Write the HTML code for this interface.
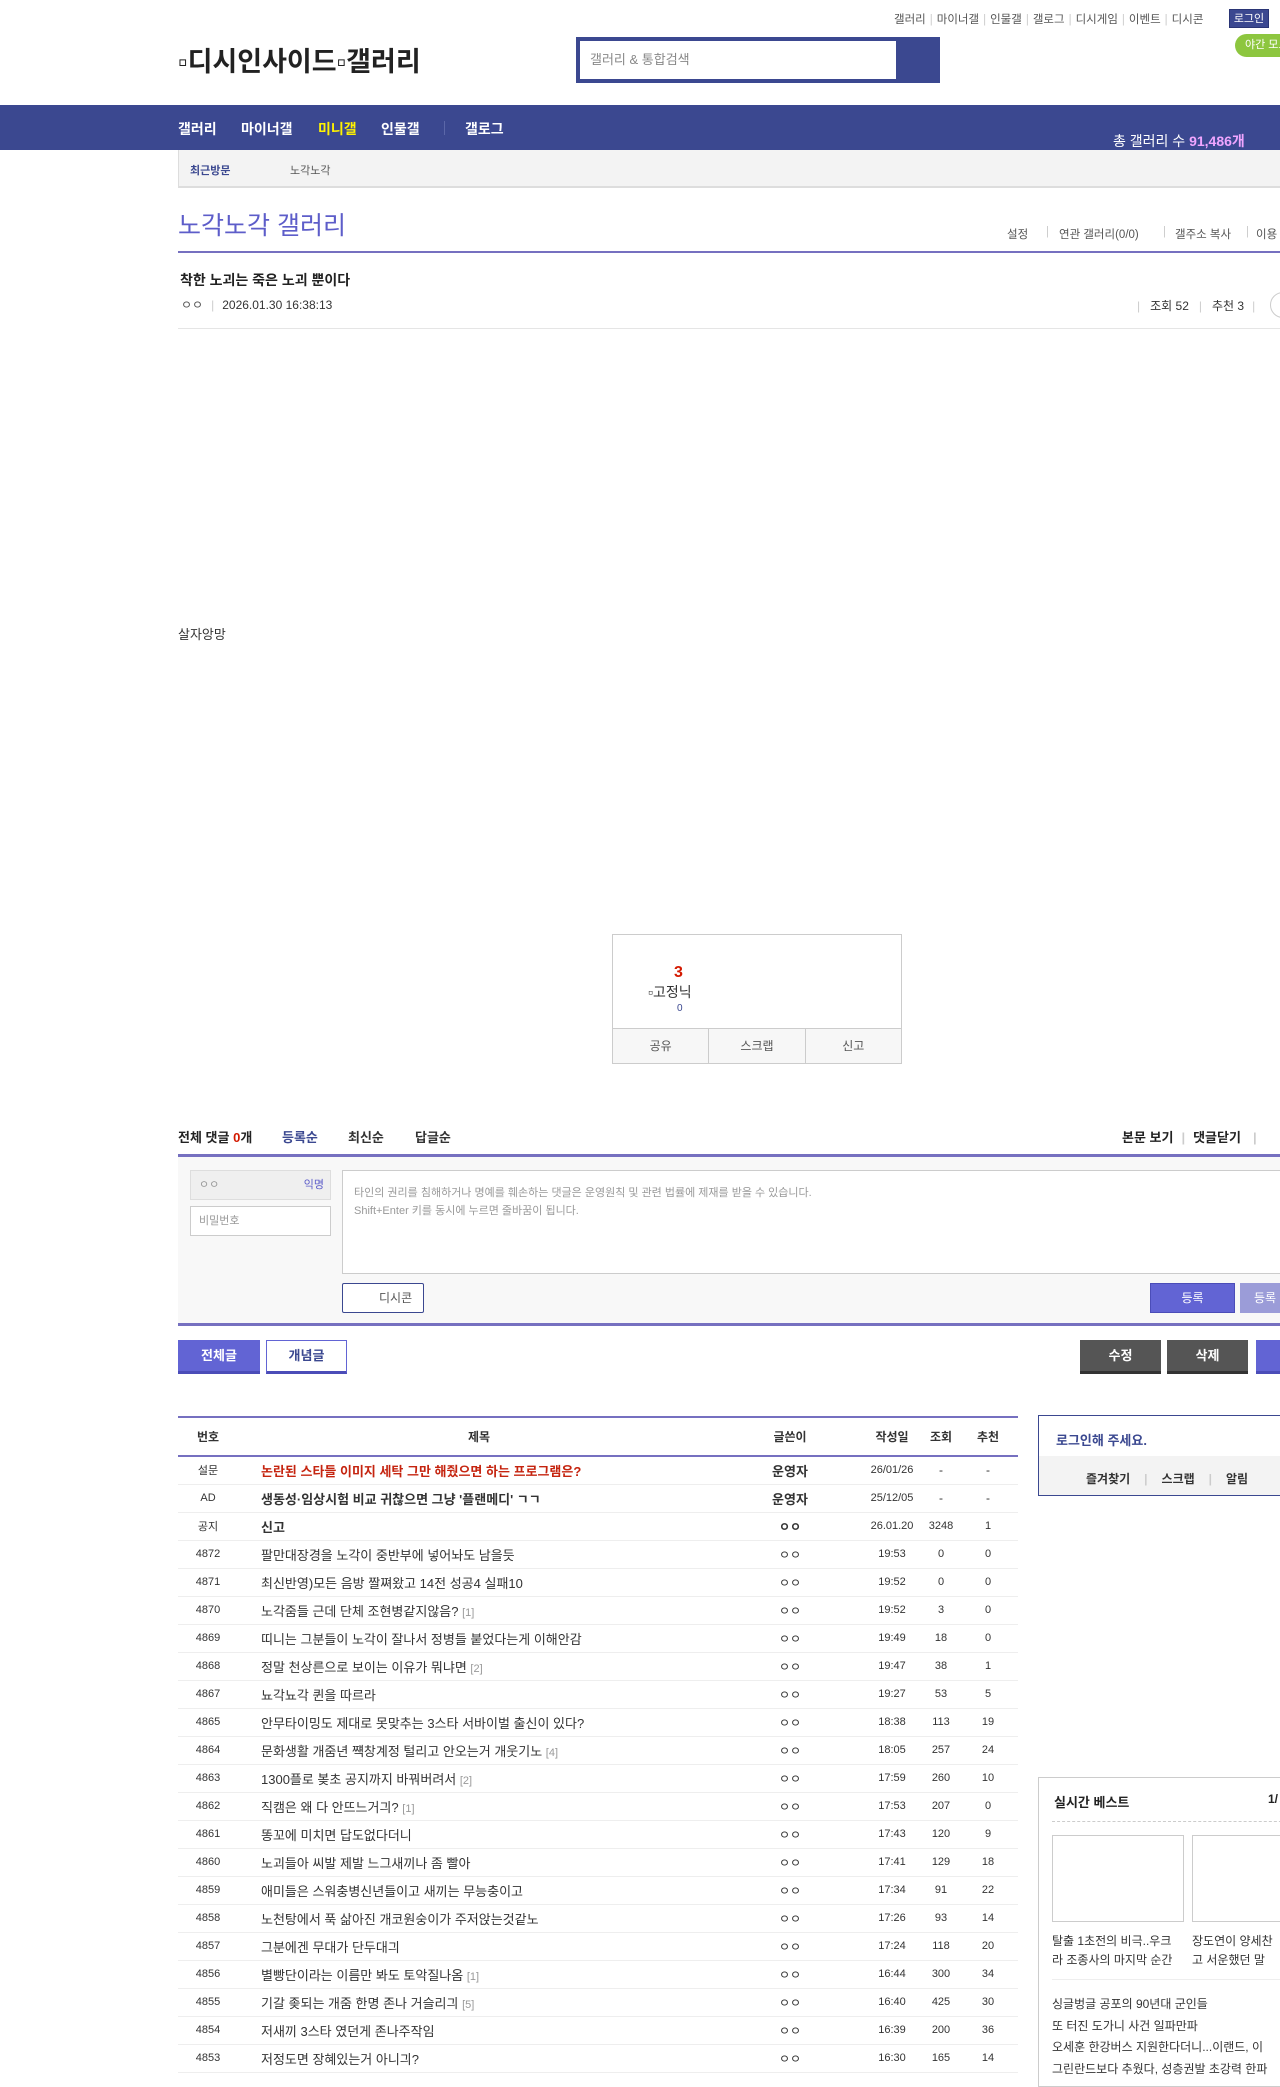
<!DOCTYPE html>
<html><head><meta charset="utf-8">
<style>
*{margin:0;padding:0;box-sizing:border-box}
body{width:1280px;height:2078px;overflow:hidden;background:#fff;font-family:"Liberation Sans","Noto Sans CJK KR",sans-serif;color:#333;position:relative;font-size:12px}
.a{position:absolute;white-space:nowrap}
.sep{color:#ccc;margin:0 4px}
table{border-collapse:collapse}
td{height:28px;border-bottom:1px solid #eee;font-size:12px;color:#333;text-align:center}
td.t{text-align:left;padding-left:23px;font-size:13px}
.rp{color:#999;font-size:11px}
.lo{position:absolute;top:0;left:0;width:1280px;height:2078px}
.lo2{position:absolute;top:5px;left:0;width:1280px;height:2073px}
</style></head><body>
<div class="lo">
<!-- top links -->
<div class="a" style="left:894px;top:11px;font-size:11.5px;color:#555">갤러리<span class="sep">|</span>마이너갤<span class="sep">|</span>인물갤<span class="sep">|</span>갤로그<span class="sep">|</span>디시게임<span class="sep">|</span>이벤트<span class="sep">|</span>디시콘</div>
<div class="a" style="left:1229px;top:9px;width:40px;height:19px;background:#3b4890;color:#fff;font-size:11px;text-align:center;line-height:19px;border:1px solid #2a3575">로그인</div>
<div class="a" style="left:1235px;top:34px;width:60px;height:23px;background:#8dc63f;border-radius:12px;color:#fff;font-size:11px;line-height:23px;padding-left:10px">야간 모드</div>
<div class="a" style="left:178px;top:40px;font-size:27px;font-weight:bold;color:#222">▫디시인사이드▫갤러리</div>
<div class="a" style="left:576px;top:37px;width:364px;height:46px;background:#3b4890"></div>
<div class="a" style="left:580px;top:41px;width:316px;height:38px;background:#fff;color:#888;font-size:13px;line-height:38px;padding-left:10px">갤러리 &amp; 통합검색</div>
<!-- nav -->
<div class="a" style="left:0;top:105px;width:1280px;height:45px;background:#3b4890"></div>
<div class="a" style="left:178px;top:119px;font-size:14px;font-weight:bold;color:#fff">갤러리</div>
<div class="a" style="left:241px;top:119px;font-size:14px;font-weight:bold;color:#fff">마이너갤</div>
<div class="a" style="left:318px;top:119px;font-size:14px;font-weight:bold;color:#fff200">미니갤</div>
<div class="a" style="left:381px;top:119px;font-size:14px;font-weight:bold;color:#fff">인물갤</div>
<div class="a" style="left:444px;top:121px;width:1px;height:14px;background:#5b67a8"></div>
<div class="a" style="left:465px;top:119px;font-size:14px;font-weight:bold;color:#fff">갤로그</div>
<div class="a" style="left:1113px;top:131px;font-size:14px;color:#fff">총 갤러리 수 <b style="color:#f0a5ff">91,486개</b></div>
<!-- recent -->
<div class="a" style="left:178px;top:150px;width:1102px;height:38px;background:#f3f3f3;border-bottom:2px solid #ddd;border-left:1px solid #ddd"></div>
<div class="a" style="left:190px;top:162px;font-size:11px;color:#3b4890;font-weight:bold">최근방문</div>
<div class="a" style="left:290px;top:162px;font-size:11px;color:#555">노각노각</div>
<!-- title -->
<div class="a" style="left:178px;top:206px;font-size:25px;color:#5d5dc9">노각노각 갤러리</div>
<div class="a" style="left:1007px;top:226px;font-size:11.5px;color:#555">설정</div>
<div class="a" style="left:1046px;top:226px;font-size:11.5px;color:#ccc">|</div>
<div class="a" style="left:1059px;top:226px;font-size:11.5px;color:#555">연관 갤러리(0/0)</div>
<div class="a" style="left:1163px;top:226px;font-size:11.5px;color:#ccc">|</div>
<div class="a" style="left:1175px;top:226px;font-size:11.5px;color:#555">갤주소 복사</div>
<div class="a" style="left:1246px;top:226px;font-size:11.5px;color:#ccc">|</div>
<div class="a" style="left:1256px;top:226px;font-size:11.5px;color:#555">이용</div>
<div class="a" style="left:178px;top:251px;width:1102px;height:2px;background:#7670c0"></div>
<div class="a" style="left:180px;top:270px;font-size:14px;font-weight:bold;color:#222">착한 노괴는 죽은 노괴 뿐이다</div>
<div class="a" style="left:181px;top:296px;font-size:12px;color:#555">ㅇㅇ<span class="sep" style="margin:0 8px">|</span><span style="color:#333">2026.01.30 16:38:13</span></div>
<div class="a" style="left:1137px;top:297px;font-size:12px;color:#333"><span class="sep" style="margin:0 10px 0 0">|</span>조회 52<span class="sep" style="margin:0 10px">|</span>추천 3<span class="sep" style="margin:0 8px">|</span></div>
<div class="a" style="left:1270px;top:292px;width:26px;height:26px;border:1px solid #ccc;border-radius:13px"></div>
<div class="a" style="left:178px;top:328px;width:1102px;height:1px;background:#e5e5e5"></div>
<div class="a" style="left:178px;top:624px;font-size:13px;color:#333">살자앙망</div>
</div>
<div class="lo2">
<!-- recommend box -->
<div class="a" style="left:612px;top:929px;width:290px;height:130px;border:1px solid #ccc"></div>
<div class="a" style="left:674px;top:959px;font-size:16px;font-weight:bold;color:#d31900">3</div>
<div class="a" style="left:648px;top:977px;font-size:14px;color:#333">▫고정닉</div>
<div class="a" style="left:677px;top:998px;font-size:10px;color:#3b4890">0</div>
<div class="a" style="left:613px;top:1023px;width:288px;height:35px;background:#f7f7f7;border-top:1px solid #ccc;display:flex;font-size:12px;color:#555">
<div style="flex:1;text-align:center;line-height:35px;border-right:1px solid #ccc">공유</div>
<div style="flex:1;text-align:center;line-height:35px;border-right:1px solid #ccc">스크랩</div>
<div style="flex:1;text-align:center;line-height:35px">신고</div></div>
<!-- comments -->
<div class="a" style="left:178px;top:1122px;font-size:13px;font-weight:bold;color:#222">전체 댓글 <span style="color:#d31900">0</span>개</div>
<div class="a" style="left:282px;top:1122px;font-size:13px;font-weight:bold;color:#3b4890">등록순</div>
<div class="a" style="left:348px;top:1122px;font-size:13px;font-weight:bold;color:#333">최신순</div>
<div class="a" style="left:415px;top:1122px;font-size:13px;font-weight:bold;color:#333">답글순</div>
<div class="a" style="left:1122px;top:1122px;font-size:13px;font-weight:bold;color:#222">본문 보기<span class="sep" style="margin:0 8px">|</span>댓글닫기<span class="sep" style="margin:0 12px">|</span></div>
<div class="a" style="left:178px;top:1149px;width:1102px;height:3px;background:#7670c0"></div>
<div class="a" style="left:178px;top:1152px;width:1102px;height:167px;background:#f8f8f8"></div>
<div class="a" style="left:190px;top:1165px;width:141px;height:30px;background:#efefef;border:1px solid #ddd;font-size:11px;color:#999;line-height:28px;padding-left:8px">ㅇㅇ<span style="position:absolute;right:6px;color:#5d5dc9">익명</span></div>
<div class="a" style="left:190px;top:1201px;width:141px;height:30px;background:#fff;border:1px solid #ccc;font-size:11px;color:#999;line-height:28px;padding-left:8px">비밀번호</div>
<div class="a" style="left:342px;top:1165px;width:950px;height:104px;background:#fff;border:1px solid #ccc;font-size:11px;color:#999;padding:13px 11px;line-height:18px">타인의 권리를 침해하거나 명예를 훼손하는 댓글은 운영원칙 및 관련 법률에 제재를 받을 수 있습니다.<br>Shift+Enter 키를 동시에 누르면 줄바꿈이 됩니다.</div>
<div class="a" style="left:342px;top:1278px;width:82px;height:30px;background:#fff;border:1px solid #3b4890;border-radius:2px;font-size:12px;color:#555;line-height:28px;padding-left:36px">디시콘</div>
<div class="a" style="left:1150px;top:1278px;width:85px;height:30px;background:#6264d4;border:1px solid #4b4db8;color:#fff;font-size:12px;text-align:center;line-height:28px">등록</div>
<div class="a" style="left:1240px;top:1278px;width:60px;height:30px;background:#9b9cd8;color:#fff;font-size:12px;line-height:30px;padding-left:14px">등록</div>
<div class="a" style="left:178px;top:1318px;width:1102px;height:3px;background:#7670c0"></div>
<div class="a" style="left:178px;top:1335px;width:82px;height:34px;background:#6264d4;border-bottom:3px solid #4b4db8;color:#fff;font-size:13px;font-weight:bold;text-align:center;line-height:32px">전체글</div>
<div class="a" style="left:266px;top:1335px;width:81px;height:34px;background:#fff;border:1px solid #6264d4;border-bottom:3px solid #4b4db8;color:#3b4890;font-size:13px;font-weight:bold;text-align:center;line-height:30px">개념글</div>
<div class="a" style="left:1080px;top:1335px;width:81px;height:34px;background:#555;border-bottom:3px solid #333;color:#fff;font-size:13px;font-weight:bold;text-align:center;line-height:32px">수정</div>
<div class="a" style="left:1167px;top:1335px;width:81px;height:34px;background:#555;border-bottom:3px solid #333;color:#fff;font-size:13px;font-weight:bold;text-align:center;line-height:32px">삭제</div>
<div class="a" style="left:1256px;top:1335px;width:40px;height:34px;background:#6264d4;border-bottom:3px solid #4b4db8"></div>
<!-- list -->
<table class="a" style="left:178px;top:1411px;width:840px;border-top:2px solid #7670c0;table-layout:fixed">
<colgroup><col style="width:60px"><col style="width:482px"><col style="width:140px"><col style="width:64px"><col style="width:34px"><col style="width:60px"></colgroup>
<tr><td style="height:39px;font-weight:bold;font-size:12px;border-bottom:2px solid #7670c0">번호</td><td style="font-weight:bold;border-bottom:2px solid #7670c0">제목</td><td style="font-weight:bold;border-bottom:2px solid #7670c0">글쓴이</td><td style="font-weight:bold;border-bottom:2px solid #7670c0">작성일</td><td style="font-weight:bold;border-bottom:2px solid #7670c0">조회</td><td style="font-weight:bold;border-bottom:2px solid #7670c0">추천</td></tr>
<tr><td style="font-size:11px">설문</td><td class="t" style="color:#c5240f;font-weight:bold">논란된 스타들 이미지 세탁 그만 해줬으면 하는 프로그램은?</td><td style="font-weight:bold;font-size:13px">운영자</td><td style="font-size:11px">26/01/26</td><td>-</td><td>-</td></tr>
<tr><td style="font-size:11px">AD</td><td class="t" style="font-weight:bold">생동성·임상시험 비교 귀찮으면 그냥 '플랜메디' ㄱㄱ</td><td style="font-weight:bold;font-size:13px">운영자</td><td style="font-size:11px">25/12/05</td><td>-</td><td>-</td></tr>
<tr><td style="font-size:11px">공지</td><td class="t" style="font-weight:bold">신고</td><td style="font-weight:bold">ㅇㅇ</td><td style="font-size:11px">26.01.20</td><td style="font-size:11px">3248</td><td style="font-size:11px">1</td></tr>
<tr><td style="font-size:11px">4872</td><td class="t">팔만대장경을 노각이 중반부에 넣어놔도 남을듯</td><td>ㅇㅇ</td><td style="font-size:11px">19:53</td><td style="font-size:11px">0</td><td style="font-size:11px">0</td></tr>
<tr><td style="font-size:11px">4871</td><td class="t">최신반영)모든 음방 짤쪄왔고 14전 성공4 실패10</td><td>ㅇㅇ</td><td style="font-size:11px">19:52</td><td style="font-size:11px">0</td><td style="font-size:11px">0</td></tr>
<tr><td style="font-size:11px">4870</td><td class="t">노각줌들 근데 단체 조현병같지않음? <span class="rp">[1]</span></td><td>ㅇㅇ</td><td style="font-size:11px">19:52</td><td style="font-size:11px">3</td><td style="font-size:11px">0</td></tr>
<tr><td style="font-size:11px">4869</td><td class="t">띠니는 그분들이 노각이 잘나서 정병들 붙었다는게 이해안감</td><td>ㅇㅇ</td><td style="font-size:11px">19:49</td><td style="font-size:11px">18</td><td style="font-size:11px">0</td></tr>
<tr><td style="font-size:11px">4868</td><td class="t">정말 천상른으로 보이는 이유가 뭐냐면 <span class="rp">[2]</span></td><td>ㅇㅇ</td><td style="font-size:11px">19:47</td><td style="font-size:11px">38</td><td style="font-size:11px">1</td></tr>
<tr><td style="font-size:11px">4867</td><td class="t">뇨각뇨각 퀸을 따르라</td><td>ㅇㅇ</td><td style="font-size:11px">19:27</td><td style="font-size:11px">53</td><td style="font-size:11px">5</td></tr>
<tr><td style="font-size:11px">4865</td><td class="t">안무타이밍도 제대로 못맞추는 3스타 서바이벌 출신이 있다?</td><td>ㅇㅇ</td><td style="font-size:11px">18:38</td><td style="font-size:11px">113</td><td style="font-size:11px">19</td></tr>
<tr><td style="font-size:11px">4864</td><td class="t">문화생활 개줌년 쨱창계정 털리고 안오는거 개웃기노 <span class="rp">[4]</span></td><td>ㅇㅇ</td><td style="font-size:11px">18:05</td><td style="font-size:11px">257</td><td style="font-size:11px">24</td></tr>
<tr><td style="font-size:11px">4863</td><td class="t">1300플로 봊초 공지까지 바꿔버려서 <span class="rp">[2]</span></td><td>ㅇㅇ</td><td style="font-size:11px">17:59</td><td style="font-size:11px">260</td><td style="font-size:11px">10</td></tr>
<tr><td style="font-size:11px">4862</td><td class="t">직캠은 왜 다 안뜨느거긔? <span class="rp">[1]</span></td><td>ㅇㅇ</td><td style="font-size:11px">17:53</td><td style="font-size:11px">207</td><td style="font-size:11px">0</td></tr>
<tr><td style="font-size:11px">4861</td><td class="t">똥꼬에 미치면 답도없다더니</td><td>ㅇㅇ</td><td style="font-size:11px">17:43</td><td style="font-size:11px">120</td><td style="font-size:11px">9</td></tr>
<tr><td style="font-size:11px">4860</td><td class="t">노괴들아 씨발 제발 느그새끼나 좀 빨아</td><td>ㅇㅇ</td><td style="font-size:11px">17:41</td><td style="font-size:11px">129</td><td style="font-size:11px">18</td></tr>
<tr><td style="font-size:11px">4859</td><td class="t">애미들은 스워충병신년들이고 새끼는 무능충이고</td><td>ㅇㅇ</td><td style="font-size:11px">17:34</td><td style="font-size:11px">91</td><td style="font-size:11px">22</td></tr>
<tr><td style="font-size:11px">4858</td><td class="t">노천탕에서 푹 삶아진 개코원숭이가 주저앉는것같노</td><td>ㅇㅇ</td><td style="font-size:11px">17:26</td><td style="font-size:11px">93</td><td style="font-size:11px">14</td></tr>
<tr><td style="font-size:11px">4857</td><td class="t">그분에겐 무대가 단두대긔</td><td>ㅇㅇ</td><td style="font-size:11px">17:24</td><td style="font-size:11px">118</td><td style="font-size:11px">20</td></tr>
<tr><td style="font-size:11px">4856</td><td class="t">별빵단이라는 이름만 봐도 토악질나옴 <span class="rp">[1]</span></td><td>ㅇㅇ</td><td style="font-size:11px">16:44</td><td style="font-size:11px">300</td><td style="font-size:11px">34</td></tr>
<tr><td style="font-size:11px">4855</td><td class="t">기갈 좆되는 개줌 한명 존나 거슬리긔 <span class="rp">[5]</span></td><td>ㅇㅇ</td><td style="font-size:11px">16:40</td><td style="font-size:11px">425</td><td style="font-size:11px">30</td></tr>
<tr><td style="font-size:11px">4854</td><td class="t">저새끼 3스타 였던게 존나주작임</td><td>ㅇㅇ</td><td style="font-size:11px">16:39</td><td style="font-size:11px">200</td><td style="font-size:11px">36</td></tr>
<tr><td style="font-size:11px">4853</td><td class="t">저정도면 장혜있는거 아니긔?</td><td>ㅇㅇ</td><td style="font-size:11px">16:30</td><td style="font-size:11px">165</td><td style="font-size:11px">14</td></tr>
</table>
<!-- sidebar -->
<div class="a" style="left:1038px;top:1410px;width:260px;height:81px;border:1px solid #3b4890"></div>
<div class="a" style="left:1056px;top:1425px;font-size:13px;font-weight:bold;color:#3b4890">로그인해 주세요.</div>
<div class="a" style="left:1039px;top:1451px;width:260px;height:39px;background:#f3f3f3"></div>
<div class="a" style="left:1086px;top:1465px;font-size:12px;font-weight:bold;color:#333">즐겨찾기<span class="sep" style="margin:0 14px">|</span>스크랩<span class="sep" style="margin:0 14px">|</span>알림</div>
<div class="a" style="left:1038px;top:1772px;width:260px;height:310px;border:1px solid #ccc"></div>
<div class="a" style="left:1054px;top:1787px;font-size:13px;font-weight:bold;color:#222">실시간 베스트</div>
<div class="a" style="left:1268px;top:1787px;font-size:12px;font-weight:bold;color:#222">1/</div>
<div class="a" style="left:1052px;top:1816px;width:240px;border-top:1px dashed #ccc"></div>
<div class="a" style="left:1052px;top:1830px;width:132px;height:87px;border:1px solid #ccc"></div>
<div class="a" style="left:1192px;top:1830px;width:132px;height:87px;border:1px solid #ccc"></div>
<div class="a" style="left:1052px;top:1927px;font-size:12px;color:#333;line-height:19px">탈출 1초전의 비극..우크<br>라 조종사의 마지막 순간</div>
<div class="a" style="left:1192px;top:1927px;font-size:12px;color:#333;line-height:19px">장도연이 양세찬<br>고 서운했던 말</div>
<div class="a" style="left:1052px;top:1974px;width:240px;border-top:1px solid #eee"></div>
<div class="a" style="left:1052px;top:1989px;font-size:12px;color:#333;line-height:21.5px">싱글벙글 공포의 90년대 군인들<br>또 터진 도가니 사건 일파만파<br>오세훈 한강버스 지원한다더니...이랜드, 이<br>그린란드보다 추웠다, 성층권발 초강력 한파</div>
</div>
</body></html>
